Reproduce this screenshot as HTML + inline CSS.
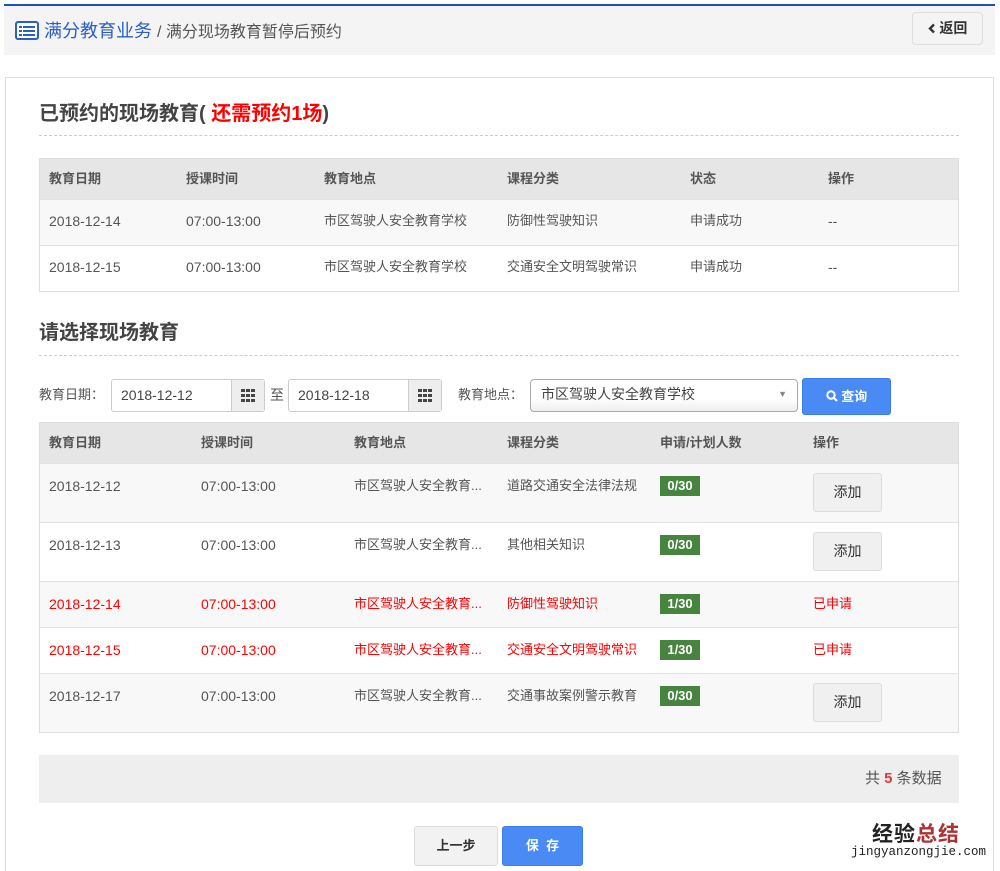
<!DOCTYPE html>
<html><head><meta charset="utf-8"><style>
*{margin:0;padding:0;box-sizing:border-box}
html,body{width:1000px;height:871px;overflow:hidden}
body{background:#fff;position:relative;font-family:"Liberation Sans","Noto Sans CJK SC",sans-serif;color:#555;font-size:14px}
.a{position:absolute;white-space:nowrap;line-height:20px}
.row{position:absolute;left:39px;width:920px;border-bottom:1px solid #e2e2e2}
.hd{background:#e6e6e6;font-weight:bold;font-size:13px;color:#555}
.red{color:#f00}
.badge{position:absolute;background:#47843f;color:#fff;font-weight:bold;font-size:13px;width:40px;height:20px;line-height:20px;text-align:center}
.btn{position:absolute;width:69px;height:39px;border:1px solid #dcdcdc;border-radius:3px;background:#f0f0f0;color:#333;font-size:14px;text-align:center;line-height:37px}
.h{font-weight:bold;font-size:13px}
.c{font-size:13px}
</style></head><body>
<div class="a" style="left:4px;top:4px;width:991px;height:2px;background:#1e4fc0"></div>
<div class="a" style="left:4px;top:6px;width:991px;height:49px;background:#f4f4f4"></div>
<svg class="a" style="left:15px;top:21px" width="24" height="19" viewBox="0 0 24 19"><rect x="1" y="1" width="22" height="17" rx="2" fill="#fff" stroke="#2a5ec8" stroke-width="2"/><rect x="4" y="5" width="3" height="2" fill="#2a5ec8"/><rect x="8" y="5" width="12" height="2" fill="#2a5ec8"/><rect x="4" y="9" width="3" height="2" fill="#2a5ec8"/><rect x="8" y="9" width="12" height="2" fill="#2a5ec8"/><rect x="4" y="13" width="3" height="2" fill="#2a5ec8"/><rect x="8" y="13" width="12" height="2" fill="#2a5ec8"/></svg>
<div class="a" style="left:44px;top:20px;font-size:18px;line-height:22px;color:#2a5ec8">满分教育业务 <span style="color:#555;font-size:16px">/ 满分现场教育暂停后预约</span></div>
<div class="a" style="left:912px;top:12px;width:71px;height:33px;border:1px solid #ddd;border-radius:4px;background:#f4f4f4;font-size:14px;color:#333;text-align:center;line-height:31px;font-weight:bold"><svg width="8" height="11" viewBox="0 0 8 11" style="vertical-align:-1px"><path d="M6 1.5 2 5.5 6 9.5" fill="none" stroke="#333" stroke-width="2.4"/></svg> 返回</div>

<div class="a" style="left:5px;top:77px;width:989px;height:820px;border:1px solid #ddd"></div>
<div class="a" style="left:39px;top:101px;font-size:20px;line-height:26px;font-weight:bold;color:#444">已预约的现场教育( <span class="red">还需预约1场</span>)</div>
<div class="a" style="left:39px;top:135px;width:920px;border-top:1px dashed #ccc"></div>

<div class="row hd" style="top:158px;height:42px"></div>
<div class="row" style="top:200px;height:46px;background:#f8f8f8"></div>
<div class="row" style="top:246px;height:46px"></div>
<div class="a" style="left:39px;top:158px;width:920px;height:134px;border:1px solid #ddd"></div>
<div class="a h" style="top:169px;left:49px">教育日期</div><div class="a h" style="top:169px;left:186px">授课时间</div><div class="a h" style="top:169px;left:324px">教育地点</div><div class="a h" style="top:169px;left:507px">课程分类</div><div class="a h" style="top:169px;left:690px">状态</div><div class="a h" style="top:169px;left:828px">操作</div>
<div class="a" style="top:211px;left:49px">2018-12-14</div><div class="a" style="top:211px;left:186px">07:00-13:00</div><div class="a c" style="top:211px;left:324px">市区驾驶人安全教育学校</div><div class="a c" style="top:211px;left:507px">防御性驾驶知识</div><div class="a c" style="top:211px;left:690px">申请成功</div><div class="a" style="top:211px;left:828px">--</div>
<div class="a" style="top:257px;left:49px">2018-12-15</div><div class="a" style="top:257px;left:186px">07:00-13:00</div><div class="a c" style="top:257px;left:324px">市区驾驶人安全教育学校</div><div class="a c" style="top:257px;left:507px">交通安全文明驾驶常识</div><div class="a c" style="top:257px;left:690px">申请成功</div><div class="a" style="top:257px;left:828px">--</div>

<div class="a" style="left:39px;top:320px;font-size:20px;line-height:26px;font-weight:bold;color:#444">请选择现场教育</div>
<div class="a" style="left:39px;top:355px;width:920px;border-top:1px dashed #ccc"></div>

<div class="a c" style="left:39px;top:385px">教育日期：</div>
<div class="a" style="left:111px;top:379px;width:154px;height:33px;border:1px solid #ccc;border-radius:3px;padding-left:9px;line-height:31px;color:#444">2018-12-12</div>
<div class="a" style="left:231px;top:380px;width:33px;height:31px;background:#eee;border-left:1px solid #ccc"><svg style="position:absolute;left:9px;top:9px" width="14" height="13" viewBox="0 0 14 13" fill="#444"><rect x="0" y="0" width="4" height="3"/><rect x="5" y="0" width="4" height="3"/><rect x="10" y="0" width="4" height="3"/><rect x="0" y="5" width="4" height="3"/><rect x="5" y="5" width="4" height="3"/><rect x="10" y="5" width="4" height="3"/><rect x="0" y="10" width="4" height="3"/><rect x="5" y="10" width="4" height="3"/><rect x="10" y="10" width="4" height="3"/></svg></div>
<div class="a" style="left:270px;top:385px">至</div>
<div class="a" style="left:288px;top:379px;width:154px;height:33px;border:1px solid #ccc;border-radius:3px;padding-left:9px;line-height:31px;color:#444">2018-12-18</div>
<div class="a" style="left:408px;top:380px;width:33px;height:31px;background:#eee;border-left:1px solid #ccc"><svg style="position:absolute;left:9px;top:9px" width="14" height="13" viewBox="0 0 14 13" fill="#444"><rect x="0" y="0" width="4" height="3"/><rect x="5" y="0" width="4" height="3"/><rect x="10" y="0" width="4" height="3"/><rect x="0" y="5" width="4" height="3"/><rect x="5" y="5" width="4" height="3"/><rect x="10" y="5" width="4" height="3"/><rect x="0" y="10" width="4" height="3"/><rect x="5" y="10" width="4" height="3"/><rect x="10" y="10" width="4" height="3"/></svg></div>
<div class="a c" style="left:458px;top:385px">教育地点：</div>
<div class="a" style="left:530px;top:379px;width:268px;height:33px;border:1px solid #aaa;border-radius:4px;padding-left:10px;line-height:28px;background:linear-gradient(#fff 60%,#eee);color:#444">市区驾驶人安全教育学校<span style="position:absolute;right:10px;top:0;font-size:9px;color:#888">▼</span></div>
<div class="a" style="left:802px;top:378px;width:89px;height:37px;background:#4a8af4;border:1px solid #3b7de8;border-radius:3px;color:#fff;font-weight:bold;font-size:13px;text-align:center;line-height:35px">
<svg width="12" height="12" viewBox="0 0 12 12" style="vertical-align:-1px"><circle cx="5" cy="5" r="3.7" fill="none" stroke="#fff" stroke-width="2"/><path d="M7.6 7.6 11 11" stroke="#fff" stroke-width="2.2"/></svg> 查询</div>

<div class="row hd" style="top:422px;height:42px"></div>
<div class="row" style="top:464px;height:59px;background:#f8f8f8"></div>
<div class="row" style="top:523px;height:59px"></div>
<div class="row" style="top:582px;height:46px;background:#f8f8f8"></div>
<div class="row" style="top:628px;height:46px"></div>
<div class="row" style="top:674px;height:59px;background:#f8f8f8"></div>
<div class="a" style="left:39px;top:422px;width:920px;height:311px;border:1px solid #ddd"></div>
<div class="a h" style="top:433px;left:49px">教育日期</div><div class="a h" style="top:433px;left:201px">授课时间</div><div class="a h" style="top:433px;left:354px">教育地点</div><div class="a h" style="top:433px;left:507px">课程分类</div><div class="a h" style="top:433px;left:660px">申请/计划人数</div><div class="a h" style="top:433px;left:813px">操作</div>

<div class="a" style="top:476px;left:49px">2018-12-12</div><div class="a" style="top:476px;left:201px">07:00-13:00</div><div class="a c" style="top:476px;left:354px">市区驾驶人安全教育...</div><div class="a c" style="top:476px;left:507px">道路交通安全法律法规</div><div class="badge" style="top:476px;left:660px">0/30</div><div class="btn" style="top:473px;left:813px">添加</div>
<div class="a" style="top:535px;left:49px">2018-12-13</div><div class="a" style="top:535px;left:201px">07:00-13:00</div><div class="a c" style="top:535px;left:354px">市区驾驶人安全教育...</div><div class="a c" style="top:535px;left:507px">其他相关知识</div><div class="badge" style="top:535px;left:660px">0/30</div><div class="btn" style="top:532px;left:813px">添加</div>
<div class="a red" style="top:594px;left:49px">2018-12-14</div><div class="a red" style="top:594px;left:201px">07:00-13:00</div><div class="a red c" style="top:594px;left:354px">市区驾驶人安全教育...</div><div class="a red c" style="top:594px;left:507px">防御性驾驶知识</div><div class="badge" style="top:594px;left:660px">1/30</div><div class="a red c" style="top:594px;left:813px">已申请</div>
<div class="a red" style="top:640px;left:49px">2018-12-15</div><div class="a red" style="top:640px;left:201px">07:00-13:00</div><div class="a red c" style="top:640px;left:354px">市区驾驶人安全教育...</div><div class="a red c" style="top:640px;left:507px">交通安全文明驾驶常识</div><div class="badge" style="top:640px;left:660px">1/30</div><div class="a red c" style="top:640px;left:813px">已申请</div>
<div class="a" style="top:686px;left:49px">2018-12-17</div><div class="a" style="top:686px;left:201px">07:00-13:00</div><div class="a c" style="top:686px;left:354px">市区驾驶人安全教育...</div><div class="a c" style="top:686px;left:507px">交通事故案例警示教育</div><div class="badge" style="top:686px;left:660px">0/30</div><div class="btn" style="top:683px;left:813px">添加</div>

<div class="a" style="left:39px;top:755px;width:920px;height:48px;background:#eee"></div>
<div class="a" style="left:865px;top:769px;font-size:15px;color:#555">共 <b style="color:#e03a3a">5</b> 条数据</div>

<div class="a" style="left:414px;top:826px;width:84px;height:40px;border:1px solid #ddd;border-radius:3px;background:#f2f2f2;color:#333;font-weight:bold;font-size:13px;text-align:center;line-height:38px">上一步</div>
<div class="a" style="left:502px;top:826px;width:81px;height:40px;border:1px solid #3b7de8;border-radius:3px;background:#4a8af4;color:#fff;font-weight:bold;font-size:13px;text-align:center;line-height:38px">保&nbsp;&nbsp;存</div>

<div class="a" style="left:872px;top:822px;font-size:21px;line-height:26px;font-weight:bold;color:#222;letter-spacing:1px">经验<span style="color:#a33">总结</span></div>
<div class="a" style="left:851px;top:842px;font-family:'Liberation Mono',monospace;font-size:12.5px;color:#222">jingyanzongjie.com</div>
</body></html>
